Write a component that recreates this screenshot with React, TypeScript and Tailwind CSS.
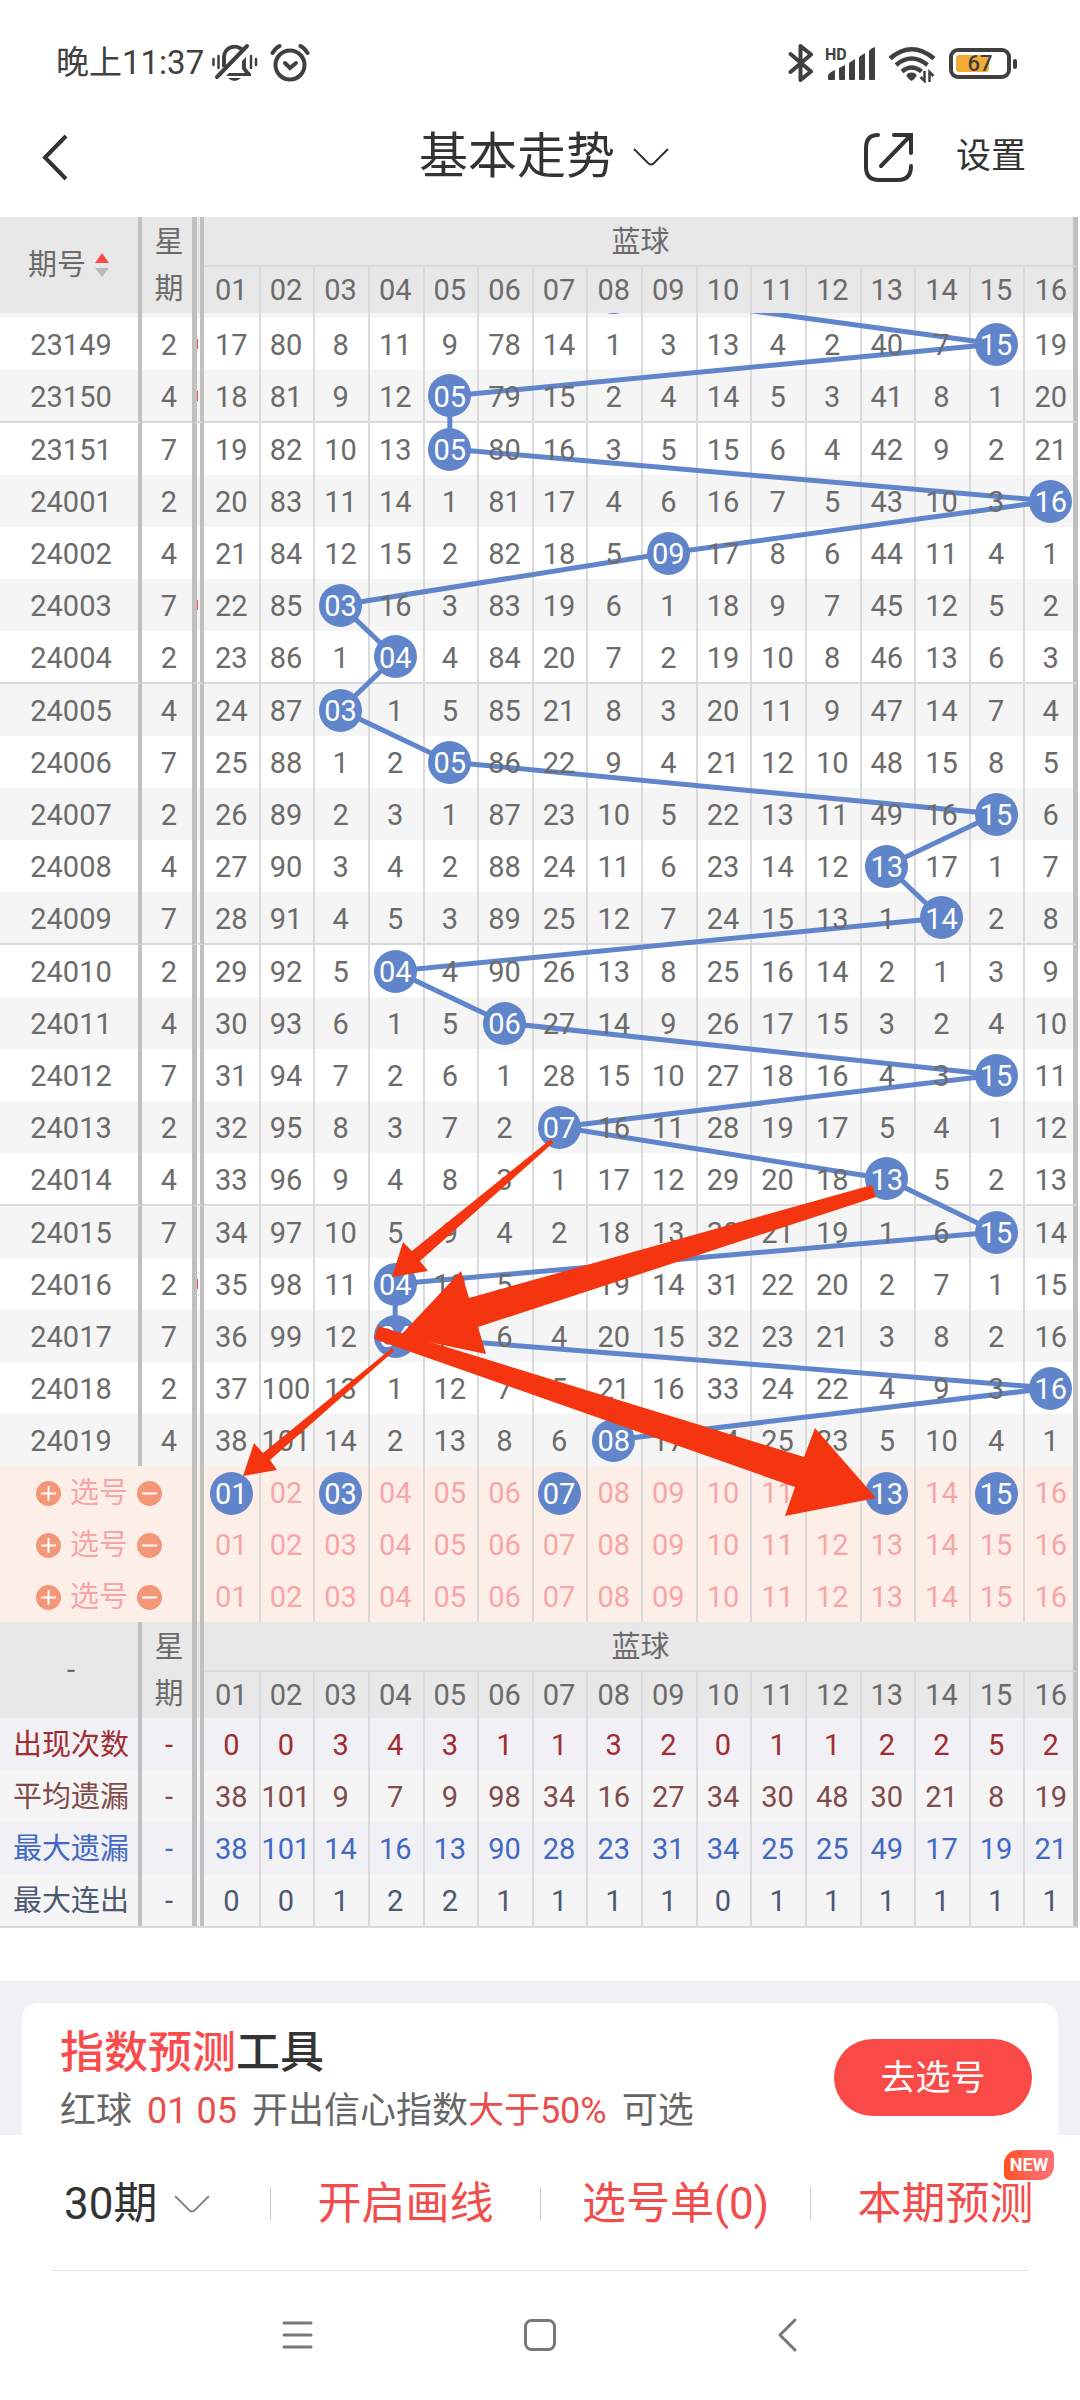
import type { ReactNode } from "react";

const balls = Array.from({ length: 16 }, (_, i) => i + 1);
const pad = (n: number) => String(n).padStart(2, "0");

// issue, weekday, winning blue ball
const draws: [string, number, number][] = [
  ["23149", 2, 15],
  ["23150", 4, 5],
  ["23151", 7, 5],
  ["24001", 2, 16],
  ["24002", 4, 9],
  ["24003", 7, 3],
  ["24004", 2, 4],
  ["24005", 4, 3],
  ["24006", 7, 5],
  ["24007", 2, 15],
  ["24008", 4, 13],
  ["24009", 7, 14],
  ["24010", 2, 4],
  ["24011", 4, 6],
  ["24012", 7, 15],
  ["24013", 2, 7],
  ["24014", 4, 13],
  ["24015", 7, 15],
  ["24016", 2, 4],
  ["24017", 7, 4],
  ["24018", 2, 16],
  ["24019", 4, 8],
];

const firstMisses = [17, 80, 8, 11, 9, 78, 14, 1, 3, 13, 4, 2, 40, 7, 0, 19];

// each row holds how many draws a ball has been missing, 0 = drawn
const misses = draws.reduce<number[][]>((rows, [, , hit], i) => {
  const prev = rows[i - 1];
  rows.push(prev ? prev.map((n, b) => (b + 1 === hit ? 0 : n + 1)) : firstMisses);
  return rows;
}, []);

// rows where a red ball peeks out of the scrolled-away area
const redPeek = ["23149", "23150", "24003", "24016"];

const picks = [[1, 3, 7, 13, 15], [], []];

const stats = [
  { label: "出现次数", color: "text-[#a02c30]", bg: "bg-[#f0f0f5]", values: [0, 0, 3, 4, 3, 1, 1, 3, 2, 0, 1, 1, 2, 2, 5, 2] },
  { label: "平均遗漏", color: "text-[#824a4a]", bg: "bg-[#f5f5f5]", values: [38, 101, 9, 7, 9, 98, 34, 16, 27, 34, 30, 48, 30, 21, 8, 19] },
  { label: "最大遗漏", color: "text-[#4169c4]", bg: "bg-[#f0f0f5]", values: [38, 101, 14, 16, 13, 90, 28, 23, 31, 34, 25, 25, 49, 17, 19, 21] },
  { label: "最大连出", color: "text-[#4c5872]", bg: "bg-[#f5f5f5]", values: [0, 0, 1, 2, 2, 1, 1, 1, 1, 0, 1, 1, 1, 1, 1, 1] },
];

const isGroupEnd = (i: number) => i % 5 === 1 && i < draws.length - 1;

// trend line geometry, measured from the bottom of the table head
const ballX = (n: number) => 204 + 54.625 * (n - 0.5);
const rowY = (i: number) => 5 + i * 52 + 26 + Math.floor((i + 3) / 5);
const trend = [
  `${ballX(8)},-21`,
  ...draws.map(([, , hit], i) => `${ballX(hit)},${rowY(i)}`),
].join(" ");

function Ball({ n }: { n: number }) {
  return (
    <span className="relative z-10 mx-auto flex size-[43px] items-center justify-center rounded-full bg-[#6085ca] pt-0.5 text-white">
      {pad(n)}
    </span>
  );
}

function Gutter({ rowSpan, line, children }: { rowSpan?: number; line?: boolean; children?: ReactNode }) {
  return (
    <td
      rowSpan={rowSpan}
      className={`border-l-[5px] border-r-4 border-x-[#c0c0c0] p-0 ${line ? "border-b-2 border-b-[#dadada]" : ""}`}
    >
      {children}
    </td>
  );
}

const cell = (n: number, line = false) =>
  `p-0 font-normal ${n > 1 ? "border-l-2 border-l-[#dadada]" : ""} ${
    n === 16 ? "border-r-[5px] border-r-[#c0c0c0] pl-[3px]" : n > 1 ? "pr-0.5" : ""
  } ${line ? "border-b-2 border-b-[#dadada]" : ""}`;

function HeadRows({ children }: { children: ReactNode }) {
  return (
    <>
      <tr className="h-[50px] bg-[#e8e8e8]">
        <th rowSpan={2} className="border-r-4 border-[#c0c0c0] p-0 pl-1 font-normal">
          {children}
        </th>
        <th rowSpan={2} className="p-0 pl-1 pt-0.5 font-normal leading-[47px]">
          星<br />期
        </th>
        <Gutter rowSpan={2} />
        <th colSpan={16} className="border-b-2 border-r-[5px] border-b-[#dadada] border-r-[#c0c0c0] p-0 pl-1 pt-0.5 font-normal">
          蓝球
        </th>
      </tr>
      <tr className="h-[46px] bg-[#e8e8e8]">
        {balls.map((n) => (
          <th key={n} className={cell(n)}>
            {pad(n)}
          </th>
        ))}
      </tr>
    </>
  );
}

function TrendTable() {
  return (
    <div className="relative pr-0.5">
      <table className="w-full table-fixed border-separate border-spacing-0 text-center text-[29px] leading-[36px] text-[#6b6b6b]">
        <colgroup>
          <col className="w-[142px]" />
          <col className="w-[50px]" />
          <col className="w-[12px]" />
          {balls.map((n) => (
            <col key={n} />
          ))}
        </colgroup>
        <thead>
          <HeadRows>
            <span className="flex items-center justify-center gap-2 pr-1">
              期号
              <svg className="h-6 w-4" viewBox="0 0 16 24">
                <path d="M8 0l7 10H1z" fill="#fa4b4b" />
                <path d="M8 24l7-9H1z" fill="#b9b9b9" />
              </svg>
            </span>
          </HeadRows>
        </thead>
        <tbody>
          <tr className="h-[5px] bg-[#f5f5f5] leading-none">
            <td className="border-r-4 border-[#c0c0c0] p-0" />
            <td className="p-0" />
            <Gutter />
            {balls.map((n) => (
              <td key={n} className={cell(n)} />
            ))}
          </tr>
          {draws.map(([issue, day, hit], i) => {
            const line = isGroupEnd(i);
            return (
              <tr key={issue} className={`${line ? "h-[53px]" : "h-[52px]"} ${i % 2 ? "bg-[#f5f5f5]" : "bg-white"}`}>
                <td className={`border-r-4 border-r-[#c0c0c0] p-0 pl-1 pt-0.5 ${line ? "border-b-2 border-b-[#dadada]" : ""}`}>
                  {issue}
                </td>
                <td className={`p-0 pl-1 pt-0.5 ${line ? "border-b-2 border-b-[#dadada]" : ""}`}>{day}</td>
                <Gutter line={line}>
                  {redPeek.includes(issue) && <span className="block h-[10px] w-px bg-[#fa4b4b]" />}
                </Gutter>
                {balls.map((n) => (
                  <td key={n} className={cell(n, line)}>
                    {n === hit ? <Ball n={n} /> : <span className="relative z-10 block pt-0.5">{misses[i][n - 1]}</span>}
                  </td>
                ))}
              </tr>
            );
          })}
          {picks.map((picked, i) => (
            <tr key={i} className="h-[52px] bg-[#feeee8] text-[#f7a6a8]">
              <td colSpan={2} className="p-0 pl-1.5 pt-0.5">
                <div className="flex items-center justify-center gap-[9px]">
                  <button aria-label="增加" className="size-[25px] rounded-full bg-[#f49678]">
                    <svg viewBox="0 0 25 25" stroke="#fff" strokeWidth="2">
                      <path d="M5 12.5h15M12.5 5v15" />
                    </svg>
                  </button>
                  选号
                  <button aria-label="减少" className="size-[25px] rounded-full bg-[#f49678]">
                    <svg viewBox="0 0 25 25" stroke="#fff" strokeWidth="2">
                      <path d="M5 12.5h15" />
                    </svg>
                  </button>
                </div>
              </td>
              <Gutter />
              {balls.map((n) => (
                <td key={n} className={cell(n)}>
                  <button className="block w-full pt-0.5">{picked.includes(n) ? <Ball n={n} /> : pad(n)}</button>
                </td>
              ))}
            </tr>
          ))}
        </tbody>
        <tbody>
          <HeadRows>-</HeadRows>
          {stats.map((row) => (
            <tr key={row.label} className={`h-[52px] ${row.bg} ${row.color}`}>
              <td className="border-r-4 border-[#c0c0c0] p-0 pl-1 pt-0.5">{row.label}</td>
              <td className="p-0 pl-1 pt-0.5">-</td>
              <Gutter />
              {row.values.map((v, i) => (
                <td key={i} className={cell(i + 1)}>
                  <span className="block pt-0.5">{v}</span>
                </td>
              ))}
            </tr>
          ))}
        </tbody>
      </table>
      <div className="h-0.5 bg-[#dadada]" />

      {/* Trend line, sits between the cell backgrounds and the numbers */}
      <svg
        className="pointer-events-none absolute left-0 top-24 h-[1153px] w-full overflow-hidden"
        viewBox="0 0 1080 1153"
        preserveAspectRatio="none"
      >
        <polyline points={trend} fill="none" stroke="#6085ca" strokeWidth="5" />
        <circle cx={ballX(8)} cy="-21" r="22" fill="#6085ca" />
      </svg>

      {/* Hand drawn arrows */}
      <svg
        className="pointer-events-none absolute inset-0 z-20 size-full"
        viewBox="0 217 1080 1711"
        preserveAspectRatio="none"
        fill="#f5350f"
      >
        <path d="M551 1139L411.900 1251L403 1242L392 1277L428 1271L420 1261L553 1143Z" />
        <path d="M872 1185L469 1298L461 1271L400 1336L486 1354L478 1327L876 1197Z" />
        <path d="M378 1326L804 1457L815 1428L876 1498L785 1516L795 1487L374 1339Z" />
        <path d="M392 1348L263 1453L254 1443L243 1476L277 1470L270 1460L394 1351Z" />
      </svg>
    </div>
  );
}

function Chevron({ className, width }: { className: string; width: string }) {
  return (
    <svg className={className} viewBox="0 0 36 18" fill="none" stroke="currentColor" strokeWidth={width}>
      <path d="M1 1l14.500 14.500q2.500 2 5 0L35 1" />
    </svg>
  );
}

function StatusBar() {
  return (
    <div className="flex h-24 items-center justify-between pl-14 pr-[69px] pt-[30px] text-[#404040]">
      <div className="flex items-center">
        <span className="text-[33px] leading-[40px]">晚上11:37</span>
        <svg className="ml-2 h-10 w-[46px]" viewBox="0 0 46 40" fill="none" stroke="currentColor" strokeWidth="4">
          <path d="M12 24V14a10.500 10.500 0 0 1 19-6" />
          <path d="M5 34L35 3" strokeLinecap="round" />
          <path d="M14 33h25v-2l-5-6V14l-4 4v8l3 4H17z" fill="currentColor" stroke="none" />
          <path d="M16 35h13q-6.500 6-13 0z" fill="currentColor" stroke="none" />
          <path d="M1.500 16v6M6.500 13v12M39 13v12M44 16v6" strokeWidth="2.500" strokeLinecap="round" />
        </svg>
        <svg className="ml-3 size-10" viewBox="0 0 40 40" fill="none" stroke="currentColor" strokeLinecap="round">
          <circle cx="20" cy="22" r="14.500" strokeWidth="4" />
          <path d="M15 20l5 5 6-5" strokeWidth="4" />
          <path d="M2.500 10q3-5 7-7M37.500 10q-3-5-7-7" strokeWidth="4" />
        </svg>
      </div>
      <div className="flex items-center">
        <svg className="h-10 w-[26px]" viewBox="0 0 26 40" fill="none" stroke="currentColor" strokeWidth="4" strokeLinecap="round" strokeLinejoin="round">
          <path d="M2.500 11L23 28.500 12.500 37V3L23 11.500 2.500 29" />
        </svg>
        <div className="relative ml-[11px] h-10 w-[52px]">
          <span className="absolute left-0 top-1 text-[16px] font-bold leading-4">HD</span>
          <svg className="size-full" viewBox="0 0 52 40" fill="currentColor">
            <path d="M3 36v-3q0-3 7-6v9q0 1-1 1H4q-1 0-1-1zM14 36V25l6-3v14q0 1-1 1h-4q-1 0-1-1zM24 36V20l6-4v20q0 1-1 1h-4q-1 0-1-1zM34 36V14l6-4v26q0 1-1 1h-4q-1 0-1-1zM44 36V8q2-3 6-4v32q0 1-1 1h-4q-1 0-1-1z" />
          </svg>
        </div>
        <svg className="ml-[11px] h-10 w-12" viewBox="0 0 48 40" fill="none" stroke="currentColor" strokeWidth="4.500">
          <path d="M2 15.500q21.500-18.500 44 0" />
          <path d="M8 22q15.500-13 31.500 0" />
          <path d="M14 28.500q9.500-8 19.500 0" />
          <path d="M23.500 29.500q5 0 5 3.500-2 3.500-5 5-3-1.500-5-5 0-3.500 5-3.500z" fill="currentColor" stroke="none" />
          <path d="M36.500 28v10l-4-4M41.500 39V29l4 4" strokeWidth="2.500" />
        </svg>
        <div className="relative ml-[13px] flex h-[31px] w-[62px] items-center rounded-[9px] border-4 border-current pl-[3px]">
          <span className="h-[17px] w-[33px] rounded-[3px] bg-[#f5ac36]" />
          <span className="absolute inset-0 text-center text-[22px] font-medium leading-[23px]">67</span>
          <span className="absolute -right-[10px] top-[7px] h-[10px] w-1 rounded-sm bg-current" />
        </div>
      </div>
    </div>
  );
}

function TitleBar() {
  return (
    <header className="relative flex h-[121px] items-center justify-between px-10 text-[#333]">
      <button aria-label="返回">
        <svg className="h-12 w-7" viewBox="0 0 28 48" fill="none" stroke="currentColor" strokeWidth="4">
          <path d="M26 3L5 24.500 26 46" />
        </svg>
      </button>
      <button className="absolute left-1/2 flex -translate-x-1/2 items-center gap-[18px] pl-2">
        <h1 className="text-[49px] leading-[60px]">基本走势</h1>
        <Chevron className="h-[18px] w-9" width="2" />
      </button>
      <div className="flex items-center gap-[42px] pr-[14px]">
        <button aria-label="分享">
          <svg className="size-[50px]" viewBox="0 0 50 50" fill="none" stroke="currentColor" strokeWidth="4" strokeLinecap="round">
            <path d="M14 3Q2 3 2 16v19q0 13 13 13h19q13 0 13-14" />
            <path d="M30 3h17v18M46 4L17 34" />
          </svg>
        </button>
        <button className="text-[35px] leading-[44px]">设置</button>
      </div>
    </header>
  );
}

function PredictCard() {
  return (
    <section className="mt-[53px] h-[154px] overflow-hidden bg-[#f0f0f5] px-[22px] pt-[22px]">
      <div className="flex items-start justify-between rounded-t-2xl bg-white pb-10 pl-[38px] pr-[26px]">
        <div className="pt-5">
          <h2 className="text-[44px] font-medium leading-[60px] text-[#333]">
            <span className="text-[#f94b4b]">指数预测</span>工具
          </h2>
          <p className="flex text-[36px] leading-[56px] text-[#666]">
            红球<span className="px-[15px] text-[#e94e4c]">01 05</span>开出信心指数
            <span className="pr-[15px] text-[#e94e4c]">大于50%</span>可选
          </p>
        </div>
        <button className="mt-9 h-[77px] w-[198px] rounded-full bg-[#f94a48] pt-0.5 text-[35px] leading-[44px] text-white">去选号</button>
      </div>
    </section>
  );
}

function Toolbar() {
  return (
    <div className="grid h-[135px] grid-cols-4 items-center bg-white pt-0.5 text-[44px] leading-[56px] text-[#f24c4b]">
      <label className="flex items-center justify-center gap-4 pl-1 text-[#333]">
        <select aria-label="期数" className="appearance-none">
          <option>30期</option>
        </select>
        <Chevron className="h-[18px] w-9 text-[#888]" width="2" />
      </label>
      <div className="flex items-center">
        <span className="h-[33px] w-px bg-[#ccc]" />
        <button className="flex-1">开启画线</button>
      </div>
      <div className="flex items-center">
        <span className="h-[33px] w-px bg-[#ccc]" />
        <button className="flex-1">选号单(0)</button>
      </div>
      <div className="relative flex items-center">
        <span className="h-[33px] w-px bg-[#ccc]" />
        <button className="flex-1">本期预测</button>
        <span className="absolute -top-[26px] right-[26px] h-[30px] w-[50px] rounded-[5px] rounded-br-[14px] rounded-tl-[14px] bg-gradient-to-r from-[#ff5218] to-[#ff7078] text-center text-[18px] font-bold leading-[30px] text-white">
          NEW
        </span>
      </div>
    </div>
  );
}

function SystemNav() {
  return (
    <nav className="grid h-[129px] grid-cols-3 place-items-center px-[172px] text-[#777]">
      <button aria-label="最近任务">
        <svg className="size-12" viewBox="0 0 48 48" stroke="currentColor" strokeWidth="3" strokeLinecap="round">
          <path d="M13 11h27M13 23h27M13 35h27" />
        </svg>
      </button>
      <button aria-label="主屏幕">
        <svg className="size-12" viewBox="0 0 48 48" fill="none" stroke="currentColor" strokeWidth="3">
          <rect x="9.500" y="8.500" width="29" height="29" rx="6" />
        </svg>
      </button>
      <button aria-label="系统返回">
        <svg className="size-12" viewBox="0 0 48 48" fill="none" stroke="currentColor" strokeWidth="3" strokeLinecap="round" strokeLinejoin="round">
          <path d="M34 8L19 23l15 15" />
        </svg>
      </button>
    </nav>
  );
}

export default function App() {
  return (
    <main className="bg-white font-['Roboto','Noto_Sans_CJK_SC',sans-serif]">
      <StatusBar />
      <TitleBar />
      <TrendTable />
      <PredictCard />
      <Toolbar />
      <div className="mx-[52px] h-px bg-[#e2e2e2]" />
      <SystemNav />
    </main>
  );
}
